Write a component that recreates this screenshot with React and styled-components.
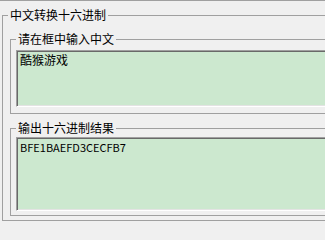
import React from 'react';
import styled, { createGlobalStyle } from 'styled-components';

const GlobalStyle = createGlobalStyle`
  html,
  body {
    margin: 0;
    padding: 0;
    background: #f0f0f0;
  }
`;

const Window = styled.div`
  width: 325px;
  height: 227px;
  box-sizing: border-box;
  overflow: hidden;
  border-top: 1px solid #a0a0a0;
  padding-top: 7px;
  background: #f0f0f0;
  font-family: 'Noto Sans CJK SC', 'Noto Sans', sans-serif;
  font-size: 12px;
  color: #000;
`;

const Group = styled.fieldset`
  margin: ${p => p.$gap || 0}px 0 0 ${p => p.$left || 0}px;
  padding: ${p => p.$pt}px 0 ${p => p.$pb}px ${p => p.$pl}px;
  width: ${p => p.$width}px;
  min-inline-size: 0;
  box-sizing: border-box;
  border: 1px solid #a0a0a0;
`;

const Caption = styled.legend`
  margin-left: ${p => p.$shift || 0}px;
  padding: 0 2px;
  font-size: 12px;
  line-height: 14px;
`;

const Box = styled.textarea`
  display: block;
  width: 100%;
  height: ${p => p.$height}px;
  box-sizing: border-box;
  margin: 0;
  padding: 2px 3px;
  resize: none;
  outline: none;
  background: #cce8cf;
  border-style: solid;
  border-width: 1px;
  border-color: #a0a0a0 #fff #fff #a0a0a0;
  box-shadow: inset 1px 1px 0 #696969, inset -1px -1px 0 #e3e3e3;
  font-family: 'Noto Sans CJK SC', 'Noto Sans', sans-serif;
  font-size: ${p => p.$size || 12}px;
  line-height: 14px;
  color: #000;
  overflow: hidden;
`;

export default function App() {
  return (
    <>
      <GlobalStyle />
      <Window>
        <Group $left={2} $width={380} $pt={10} $pb={4} $pl={7}>
          <Caption $shift={-2}>中文转换十六进制</Caption>

          <Group $width={380} $pt={4} $pb={6} $pl={5}>
            <Caption>请在框中输入中文</Caption>
            <Box $height={57} readOnly value="酷猴游戏" />
          </Group>

          <Group $gap={7} $width={380} $pt={2} $pb={4} $pl={5}>
            <Caption>输出十六进制结果</Caption>
            <Box $height={74} $size={11} readOnly value="BFE1BAEFD3CECFB7" />
          </Group>
        </Group>
      </Window>
    </>
  );
}
